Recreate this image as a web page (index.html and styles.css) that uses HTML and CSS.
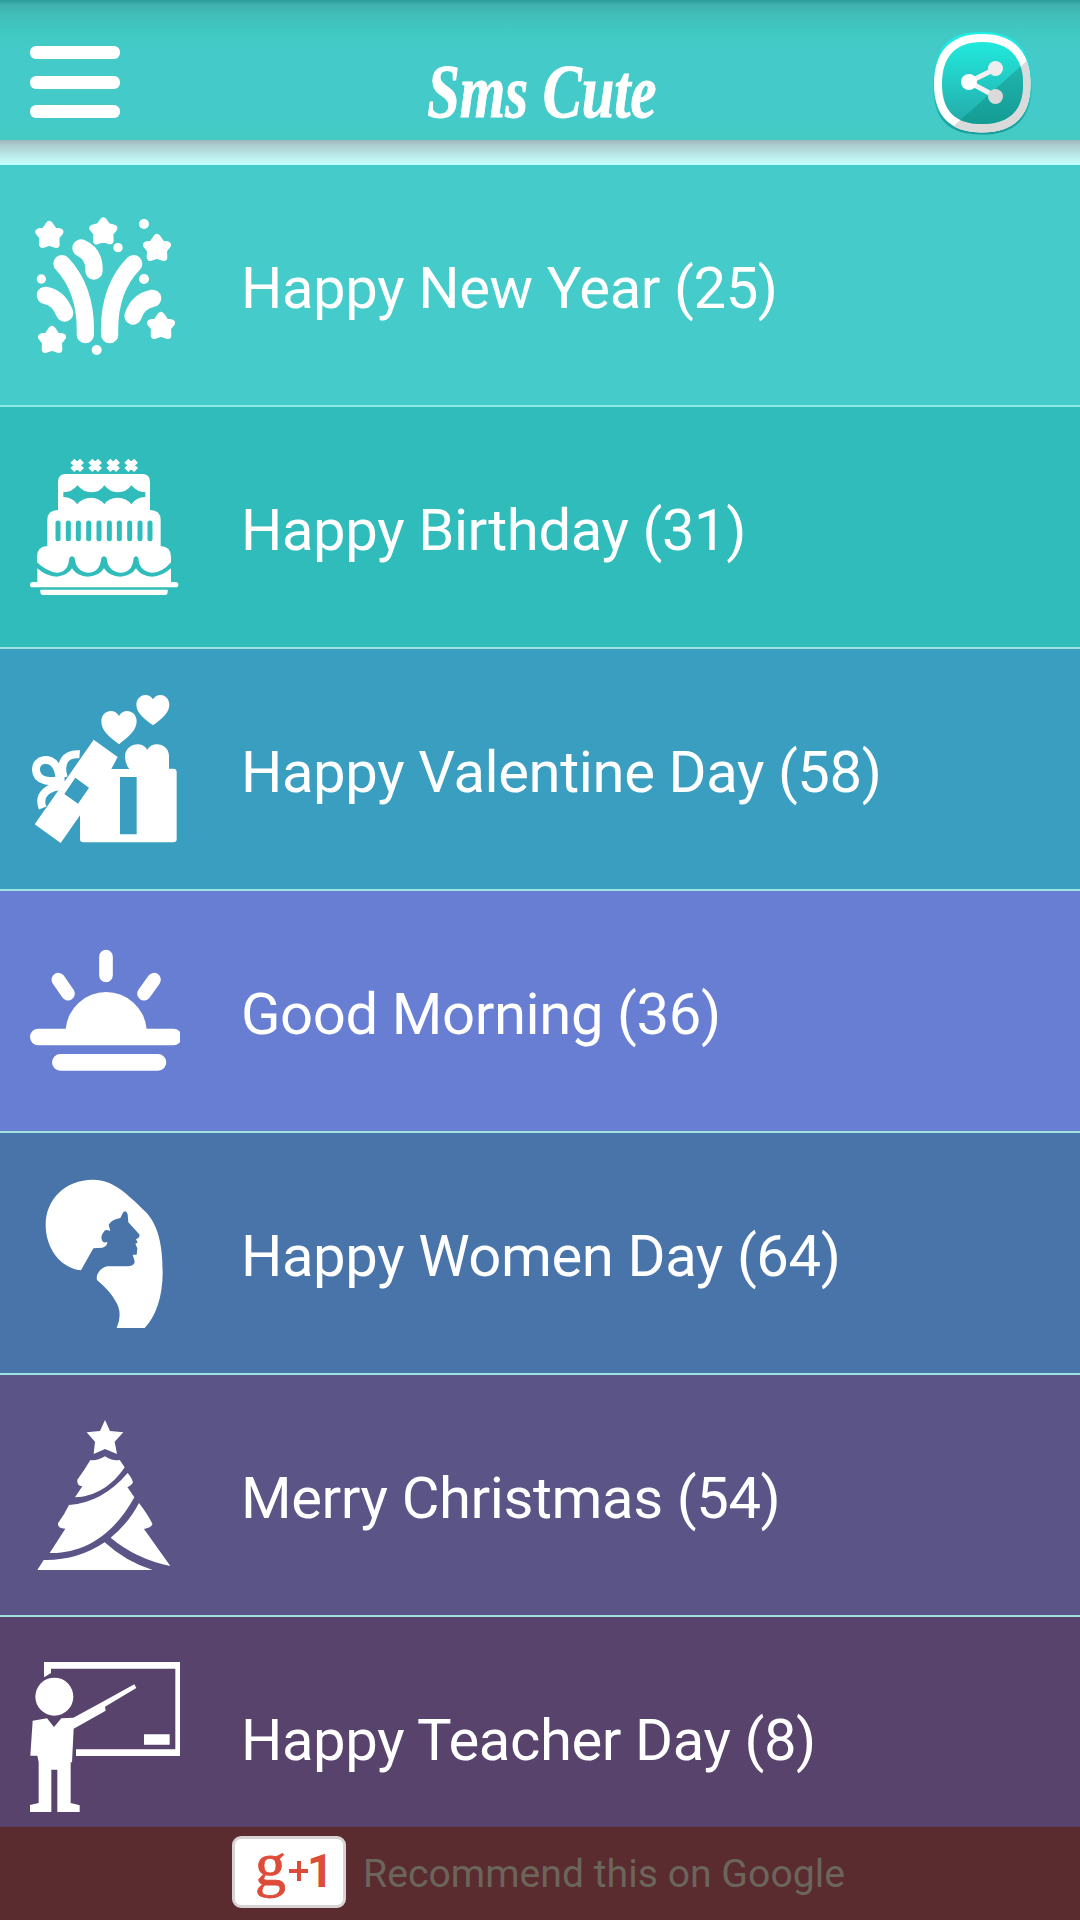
FILE: index.html
```html
<!DOCTYPE html>
<html lang="en">
<head>
<meta charset="utf-8">
<title>Sms Cute</title>
<link rel="stylesheet" href="styles.css">
</head>
<body>
<header class="topbar">
  <div class="menu"><span></span><span></span><span></span></div>
  <h1 class="title"><span>Sms Cute</span></h1>
  <svg class="share" viewBox="0 0 110 110">
    <defs>
      <linearGradient id="face" x1="0" y1="0" x2="0" y2="1"><stop offset="0" stop-color="#22e9dd"/><stop offset="1" stop-color="#24aaa9"/></linearGradient>
      <linearGradient id="shade" x1="0" y1="0" x2="0" y2="1"><stop offset="0" stop-color="#25beb9"/><stop offset="1" stop-color="#149c94"/></linearGradient>
      <linearGradient id="halo" x1="0" y1="0" x2="0" y2="1"><stop offset="0" stop-color="#18f2ea"/><stop offset=".5" stop-color="#2ecbc8"/><stop offset="1" stop-color="#179c99"/></linearGradient>
      <clipPath id="half"><path d="M110 21 10 110H110Z"/></clipPath>
    </defs>
    <path fill="url(#halo)" d="M54 2C88 2 104 20 104 54S88 104.500 54 104.500 5 90 5 54 20 2 54 2Z"/>
    <path fill="#fff" d="M54 4C86 4 102.500 22 102.500 54S86 102.500 54 102.500 6 86 6 54 22 4 54 4Z"/>
    <path fill="#dadada" clip-path="url(#half)" d="M54 4C86 4 102.500 22 102.500 54S86 102.500 54 102.500 6 86 6 54 22 4 54 4Z"/>
    <path fill="url(#face)" d="M54 12C81 12 95 27 95 54S81 94 54 94 14 81 14 54 27 12 54 12Z"/>
    <path fill="url(#shade)" clip-path="url(#half)" d="M54 12C81 12 95 27 95 54S81 94 54 94 14 81 14 54 27 12 54 12Z"/>
    <path d="M67 39 41 52 67 66" fill="none" stroke="#f1f1f1" stroke-width="5"/>
    <circle cx="41" cy="52" r="8" fill="#fff"/><circle cx="67.500" cy="38.500" r="7.500" fill="#eee"/><circle cx="67.500" cy="66.500" r="7.500" fill="#dadada"/>
  </svg>
</header>
<div class="shadow"></div>
<main class="list">
  <section class="row new-year">
    <svg class="icon" viewBox="90 60 450 450">
      <defs><path id="star" d="M0-31 12-14 31-9 19 6 20 28 0 21-20 28-19 6-31-9-12-14Z" stroke-width="22" stroke-linejoin="round"/></defs>
      <g fill="#fff" stroke="#fff"><use href="#star" x="148" y="135"/><use href="#star" x="310" y="124"/><use href="#star" x="471" y="174"/><use href="#star" x="156" y="450"/><use href="#star" x="483" y="408"/></g>
      <g fill="#fff"><circle cx="432" cy="102" r="15"/><circle cx="354" cy="173" r="14"/><circle cx="124" cy="267" r="14"/><circle cx="432" cy="267" r="15"/><circle cx="290" cy="480" r="15"/></g>
      <g fill="none" stroke="#fff" stroke-width="52" stroke-linecap="round"><path d="M186 221Q260 300 256 434"/><path d="M401 221Q324 300 329 434"/><path d="M243 174Q284 192 282 243"/><path d="M136 316Q175 322 194 369"/><path d="M458 325Q415 333 399 378"/></g>
    </svg>
    <span class="label">Happy New Year (25)</span>
  </section>
  <section class="row birthday">
    <svg class="icon" viewBox="90 66 450 450">
      <path d="M217 92 246 120M246 92 217 120M271 92 300 120M300 92 271 120M325 92 354 120M354 92 325 120M379 92 408 120M408 92 379 120" stroke="#fff" stroke-width="17"/>
      <path fill="#fff" d="M174 240V155Q174 132 197 132H427Q450 132 450 155V240Q482 240 482 270V348Q513 350 513 380V397Q487 428 456 428 417 424 415 384 408 374 401 384 398 428 361 428 323 424 320 384 312 374 304 384 300 428 264 428 227 424 224 384 216 374 208 384 205 428 170 428 140 425 111 397V378Q112 350 142 348V270Q142 240 174 240Z"/>
      <path fill="#fff" d="M112 415Q140 440 170 440 204 436 216 415 232 440 264 440 298 438 312 415 328 440 361 440 394 438 408 415 424 440 456 440 485 440 513 415V456H527Q535 456 535 464T527 472H98Q90 472 90 464T98 456H112ZM121 479H503V486Q503 495 494 495H130Q121 495 121 486Z"/>
      <path class="cut" d="M190 187Q216 187 232 166 250 187 275 187 300 187 313 166 330 187 353 187 380 187 394 166 412 187 436 187V201Q408 202 394 223 380 203 353 203 326 203 313 223 298 203 273 203 246 203 232 223 218 202 190 201Z"/>
      <path class="slots" d="M174 279V326M205 279V326M235 279V326M266 279V326M297 279V326M328 279V326M358 279V326M389 279V326M420 279V326M450 279V326"/>
    </svg>
    <span class="label">Happy Birthday (31)</span>
  </section>
  <section class="row valentine">
    <svg class="icon" viewBox="90 72 450 450">
      <g fill="#fff">
        <path d="M357 223C325 198 303 180 304 153 305 120 344 113 357 138 370 113 409 120 410 153 410 180 388 198 357 223Z"/>
        <path d="M459 166C430 144 409 127 409 104 410 73 446 66 459 88 472 66 507 73 508 104 508 127 488 144 459 166Z"/>
        <path d="M388 297Q375 282 375 257C377 222 425 210 442 239 458 210 507 222 507 257V296H520Q530 296 530 306V508Q530 517 520 517H250Q240 517 240 508V436L182 519 104 463 197 330 281 209 353 261 334 297Z"/>
      </g>
      <path fill="none" stroke="#fff" stroke-width="24" d="M194 332C150 335 110 337 108 300 106 266 151 259 168 288Q180 308 178 336M191 323C178 280 195 249 239 253M195 348C145 347 112 374 128 414"/>
      <path class="cut" d="M226 323 267 353 234 401 193 372ZM360 321H410V493H360Z"/>
    </svg>
    <span class="label">Happy Valentine Day (58)</span>
  </section>
  <section class="row morning">
    <svg class="icon" viewBox="90 48 450 450">
      <path fill="#fff" d="M197 327A122 122 0 0 1 440 327Z"/>
      <path fill="none" stroke="#fff" stroke-width="41" stroke-linecap="round" d="M318 110V166M175 179 204 221M462 179 432 221"/>
      <path fill="none" stroke="#fff" stroke-width="50" stroke-linecap="round" d="M115 351H520M181 427H474"/>
    </svg>
    <span class="label">Good Morning (36)</span>
  </section>
  <section class="row women">
    <svg class="icon" viewBox="90 54 450 450">
      <path fill="#fff" d="M243 331C176 322 137 260 137 194 137 117 197 59 278 59 335 57 382 101 435 154 476 195 488 258 488 338 488 412 466 471 434 504H350Q370 458 345 421 330 393 291 360 288 347 295 338 305 322 322 319H385Q408 316 403 301L398 284H410L412 265 406 251 413 248 408 238Q423 231 417 222L385 187 383 163Q377 147 369 158L361 174Q336 178 326 194L331 213Q315 206 311 216 300 229 307 243 310 250 322 246 322 259 307 263L280 265Z"/>
    </svg>
    <span class="label">Happy Women Day (64)</span>
  </section>
  <section class="row christmas">
    <svg class="icon" viewBox="90 60 450 450">
      <g fill="#fff">
        <path d="M315 60 330 93 370 97 344 125 351 162 315 147 281 162 285 125 260 97 300 93Z"/>
        <path d="M271 180Q289 184 315 169 337 184 359 180L374 202C336 259 282 291 225 292L247 259Q229 256 232 239 253 211 271 180Z"/>
        <path d="M383 219Q396 235 399 247 395 257 382 261L403 292C350 390 263 462 149 459L196 386Q172 386 174 370 193 344 207 315 307 308 383 219Z"/>
        <path d="M417 309Q443 343 457 371 457 382 432 387L511 498Q407 476 332 413 386 369 417 309Z"/>
        <path d="M131 480Q232 482 314 427 377 485 458 510H112Z"/>
      </g>
    </svg>
    <span class="label">Merry Christmas (54)</span>
  </section>
  <section class="row teacher">
    <svg class="icon" viewBox="90 66 450 450">
      <g fill="#fff">
        <path d="M132 66H540V348H228V328H526V86H153V99L135 110H132ZM432 283H509V314H432Z"/>
        <circle cx="163" cy="170" r="57"/>
        <path d="M98 242 141 235 162 261 184 235 220 233 300 190 403 133 409 144 315 200 317 212 221 266 216 367H212V489L239 496V516H172V389H154V516H90V495L116 489V366L112 347H91Z"/>
      </g>
    </svg>
    <span class="label">Happy Teacher Day (8)</span>
  </section>
</main>
<footer class="recommend">
  <div class="plus-one"><span class="g">g</span><svg class="mark" viewBox="0 2 20 38"><path fill="#dd4b39" d="M8 10H12V18H19V22H12V30H8V22H0V18H8Z"/></svg><span class="one">1</span></div>
  <span class="prompt">Recommend this on Google</span>
</footer>
</body>
</html>
```
FILE: styles.css
```css
* { box-sizing: border-box; }
body {
  margin: 0;
  width: 1080px;
  height: 1920px;
  overflow: hidden;
  display: flex;
  flex-direction: column;
  font-family: Roboto, sans-serif;
  color: #fff;
}
.topbar {
  flex: none;
  height: 140px;
  padding: 0 42px 0 30px;
  display: grid;
  grid-template-columns: 265px 1fr 250px;
  background: linear-gradient(#2b9b9b 0, #41b0ae 5px, #3fbfb8 16px, #40c9c3 32px, #44cac9 52px, #44cac9 115px, #43cbc2 140px);
}
.menu { width: 90px; padding-top: 46px; display: flex; flex-direction: column; gap: 16.500px; }
.menu span { height: 13px; border-radius: 6px; background: #fff; }
.title {
  margin: 0;
  padding-top: 50px;
  display: flex;
  justify-content: center;
  font: italic bold 76px/82px "Liberation Serif", serif;
  white-space: nowrap;
}
.title span { transform: scaleX(.77); -webkit-text-stroke: 1px #fff; }
.share { width: 110px; height: 110px; margin: 30px 0 0 auto; }
.shadow { flex: none; height: 25px; background: linear-gradient(#9eb5bc 0, #add0d1 6px, #b9e5e5 14px, #c2f5f4 20px, #bdfffc 25px); }
.list { flex: none; height: 1662px; overflow: hidden; }
.row { height: 242px; padding-left: 30px; display: flex; align-items: center; gap: 61px; border-bottom: 2px solid #a0e2e0; }
.icon { flex: none; width: 150px; height: 150px; }
.label { font-size: 58px; line-height: 70px; padding-top: 5px; white-space: nowrap; letter-spacing: -.4px; }
.cut { fill: var(--row); }
.slots { stroke: var(--row); stroke-width: 15; stroke-linecap: round; }
.new-year { background: #44cbca; border-color: #8eeae5; }
.birthday { --row: #2fbcbb; background: var(--row); }
.valentine { --row: #399ebf; background: var(--row); }
.morning { background: #677ed2; }
.women { background: #4974a9; }
.christmas { background: #5b5487; }
.teacher { background: #58436d; }
.recommend { height: 93px; padding: 9px 0 0 232px; display: flex; gap: 17px; background: #5a2b2f; }
.plus-one { width: 114px; height: 72px; padding: 0 20px; display: flex; align-items: center; border: 3px solid #dad3d4; border-radius: 9px; background: #fff; color: #dd4b39; }
.g { flex: none; width: 30px; font: 62px/60px "Liberation Serif", serif; margin-top: -17px; -webkit-text-stroke: .8px #dd4b39; }
.mark { flex: none; width: 20px; height: 38px; margin-left: 4px; }
.one { margin: -2px 0 0 -2px; font-size: 46px; font-weight: 700; }
.prompt { font-size: 39.200px; line-height: 58px; padding-top: 9px; color: #6b655c; white-space: nowrap; }
```
